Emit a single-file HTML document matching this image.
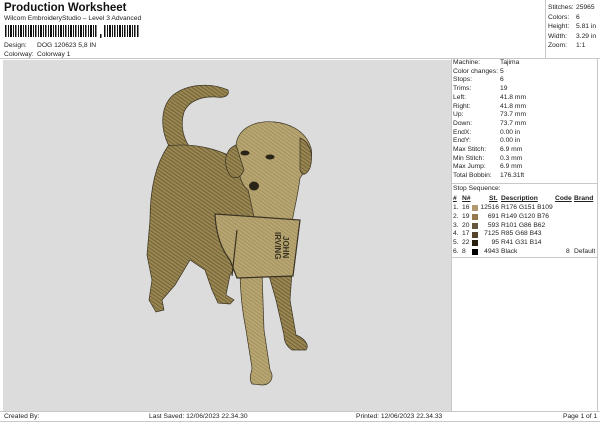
<!DOCTYPE html>
<html><head><meta charset="utf-8"><style>
*{margin:0;padding:0;box-sizing:border-box}
body{width:600px;height:424px;background:#fff;position:relative;overflow:hidden;font-family:"Liberation Sans",sans-serif;font-size:6.7px;color:#222}
.a{position:absolute;white-space:nowrap;line-height:8px}
.l{position:absolute;background:#c8c8c8}
</style></head><body>
<div class="a" style="left:4px;top:2px;font-size:11.5px;font-weight:bold;line-height:12px;color:#111">Production Worksheet</div>
<div class="a" style="left:4px;top:15px">Wilcom EmbroideryStudio – Level 3 Advanced</div>
<svg class="a" style="left:5px;top:25px" width="135" height="14">
<g fill="#111">
<rect x="0" y="0" width="1.5" height="12"/><rect x="3" y="0" width="1" height="12"/><rect x="5" y="0" width="2" height="12"/><rect x="8" y="0" width="1" height="12"/><rect x="10" y="0" width="1.5" height="12"/><rect x="13" y="0" width="1" height="12"/><rect x="15" y="0" width="2" height="12"/><rect x="18" y="0" width="1" height="12"/><rect x="20" y="0" width="1.5" height="12"/><rect x="23" y="0" width="1" height="12"/><rect x="25" y="0" width="2" height="12"/><rect x="28" y="0" width="1" height="12"/><rect x="30" y="0" width="1.5" height="12"/><rect x="33" y="0" width="1" height="12"/><rect x="35" y="0" width="2" height="12"/><rect x="38" y="0" width="1" height="12"/><rect x="40" y="0" width="1.5" height="12"/><rect x="43" y="0" width="1" height="12"/><rect x="45" y="0" width="2" height="12"/><rect x="48" y="0" width="1" height="12"/><rect x="50" y="0" width="1.5" height="12"/><rect x="53" y="0" width="1" height="12"/><rect x="55" y="0" width="2" height="12"/><rect x="58" y="0" width="1" height="12"/><rect x="60" y="0" width="1.5" height="12"/><rect x="63" y="0" width="1" height="12"/><rect x="65" y="0" width="2" height="12"/><rect x="68" y="0" width="1" height="12"/><rect x="70" y="0" width="1.5" height="12"/><rect x="73" y="0" width="1" height="12"/><rect x="75" y="0" width="2" height="12"/><rect x="78" y="0" width="1" height="12"/><rect x="80" y="0" width="1.5" height="12"/><rect x="83" y="0" width="1" height="12"/><rect x="85" y="0" width="2" height="12"/><rect x="88" y="0" width="1" height="12"/><rect x="90" y="0" width="1.5" height="12"/>
<rect x="95" y="9" width="1.5" height="4"/>
<rect x="99" y="0" width="1.5" height="12"/><rect x="102" y="0" width="1" height="12"/><rect x="104" y="0" width="2" height="12"/><rect x="107" y="0" width="1" height="12"/><rect x="109" y="0" width="1.5" height="12"/><rect x="112" y="0" width="1" height="12"/><rect x="114" y="0" width="2" height="12"/><rect x="117" y="0" width="1" height="12"/><rect x="119" y="0" width="1.5" height="12"/><rect x="122" y="0" width="1" height="12"/><rect x="124" y="0" width="2" height="12"/><rect x="127" y="0" width="1" height="12"/><rect x="129" y="0" width="1.5" height="12"/><rect x="132" y="0" width="1.5" height="12"/>
</g></svg>
<div class="a" style="left:4px;top:42px">Design:</div><div class="a" style="left:37px;top:42px">DOG 120623 5,8 IN</div>
<div class="a" style="left:4px;top:51px">Colorway:</div><div class="a" style="left:37px;top:51px">Colorway 1</div>
<div class="l" style="left:0;top:58px;width:600px;height:1px"></div>
<div class="l" style="left:545px;top:0;width:1px;height:58px"></div>
<div class="a" style="left:548px;top:3px;line-height:9.6px">Stitches:<br>Colors:<br>Height:<br>Width:<br>Zoom:</div>
<div class="a" style="left:576px;top:3px;line-height:9.6px">25965<br>6<br>5.81 in<br>3.29 in<br>1:1</div>
<div style="position:absolute;left:3px;top:60px;width:448px;height:351px;background:#dcdcdc"></div>
<div class="l" style="left:451px;top:59px;width:1px;height:352px"></div>
<div class="l" style="left:597px;top:59px;width:1px;height:352px"></div>
<div class="a" style="left:453px;top:59px;line-height:8.7px">Machine:<br>Color changes:<br>Stops:<br>Trims:<br>Left:<br>Right:<br>Up:<br>Down:<br>EndX:<br>EndY:<br>Max Stitch:<br>Min Stitch:<br>Max Jump:<br>Total Bobbin:</div>
<div class="a" style="left:500px;top:59px;line-height:8.7px">Tajima<br>5<br>6<br>19<br>41.8 mm<br>41.8 mm<br>73.7 mm<br>73.7 mm<br>0.00 in<br>0.00 in<br>6.9 mm<br>0.3 mm<br>6.9 mm<br>176.31ft</div>
<div class="l" style="left:452px;top:183px;width:146px;height:1px"></div>
<div class="a" style="left:453px;top:185px">Stop Sequence:</div>
<div class="a" style="left:453px;top:195px;font-weight:bold;text-decoration:underline">#</div>
<div class="a" style="left:462px;top:195px;font-weight:bold;text-decoration:underline">N#</div>
<div class="a" style="left:489px;top:195px;font-weight:bold;text-decoration:underline">St.</div>
<div class="a" style="left:501px;top:195px;font-weight:bold;text-decoration:underline">Description</div>
<div class="a" style="left:555px;top:195px;font-weight:bold;text-decoration:underline">Code</div>
<div class="a" style="left:574px;top:195px;font-weight:bold;text-decoration:underline">Brand</div>
<div class="a" style="left:453px;top:204px;line-height:8.8px">1.<br>2.<br>3.<br>4.<br>5.<br>6.</div>
<div class="a" style="left:462px;top:204px;line-height:8.8px">16<br>19<br>20<br>17<br>22<br>8</div>
<div class="a" style="left:478px;top:204px;line-height:8.8px;text-align:right;width:21px">12516<br>691<br>593<br>7125<br>95<br>4943</div>
<div class="a" style="left:501px;top:204px;line-height:8.8px">R176 G151 B109<br>R149 G120 B76<br>R101 G86 B62<br>R85 G68 B43<br>R41 G31 B14<br>Black</div>
<div class="a" style="left:566px;top:248px">8</div><div class="a" style="left:574px;top:248px">Default</div>
<div style="position:absolute;left:472px;top:205px;width:6px;height:6px;background:#b0976d"></div>
<div style="position:absolute;left:472px;top:214px;width:6px;height:6px;background:#95784c"></div>
<div style="position:absolute;left:472px;top:223px;width:6px;height:6px;background:#65563e"></div>
<div style="position:absolute;left:472px;top:232px;width:6px;height:6px;background:#55442b"></div>
<div style="position:absolute;left:472px;top:240px;width:6px;height:6px;background:#291f0e"></div>
<div style="position:absolute;left:472px;top:249px;width:6px;height:6px;background:#000"></div>
<div class="l" style="left:452px;top:257px;width:146px;height:1px"></div>
<div class="l" style="left:0;top:411px;width:600px;height:1px"></div>
<div class="l" style="left:0;top:421px;width:600px;height:1px"></div>
<div class="a" style="left:4px;top:413px">Created By:</div>
<div class="a" style="left:149px;top:413px">Last Saved: 12/06/2023 22.34.30</div>
<div class="a" style="left:356px;top:413px">Printed: 12/06/2023 22.34.33</div>
<div class="a" style="left:563px;top:413px">Page 1 of 1</div>
<svg style="position:absolute;left:0;top:0" width="600" height="424">
<defs>
<pattern id="h" width="3" height="3" patternUnits="userSpaceOnUse" patternTransform="rotate(35)"><rect width="3" height="3" fill="#9a8752"/><rect width="3" height="1" fill="#716238"/></pattern>
<pattern id="k" width="3" height="3" patternUnits="userSpaceOnUse" patternTransform="rotate(35)"><rect width="3" height="3" fill="#b8a672"/><rect width="3" height="0.7" fill="#9a8858"/></pattern>
</defs>
<g stroke="#3a3322" stroke-width="0.7">
<!-- tail -->
<path d="M170 148 C160 130 160 108 172 96 C186 84 210 82 228 90 C230 96 224 98 216 97 C200 96 188 102 184 112 C180 125 183 140 192 150 Z" fill="url(#h)"/>
<!-- body + hind legs -->
<path d="M168 146 C195 142 225 150 245 165 L258 215 L248 250 L230 275 L226 295 L234 300 L230 304 L218 303 L212 290 L205 270 L190 260 L175 285 L162 300 L164 310 L156 312 L149 300 L152 280 L147 255 L150 220 C150 190 155 165 168 146 Z" fill="url(#h)"/>
<!-- front leg left -->
<path d="M240 270 L262 272 L264 330 L270 370 C275 378 270 385 262 385 L252 384 C248 378 252 372 252 368 L246 330 C242 310 240 290 240 270 Z" fill="url(#k)"/>
<!-- front leg right -->
<path d="M268 272 L292 272 L290 300 L296 335 C304 338 310 345 306 350 L292 350 C286 346 284 340 284 335 L276 300 Z" fill="url(#h)"/>
<!-- head -->
<path d="M236 145 C238 128 255 120 275 122 C292 124 306 132 311 148 C314 160 306 170 300 178 C298 195 295 205 292 222 L255 222 C252 208 250 198 248 190 C240 185 236 165 236 145 Z" fill="url(#k)"/>
<!-- ears -->
<path d="M236 145 C228 148 222 158 228 172 C232 180 240 180 244 170 Z" fill="url(#h)"/>
<path d="M300 138 C310 142 314 155 310 168 C306 176 302 176 300 170 Z" fill="url(#h)"/>
<!-- book -->
<path d="M215 214 L300 220 L293 276 L237 278 L230 260 C222 250 216 235 215 214 Z" fill="url(#k)" stroke-width="1.2"/>
<path d="M237 230 L232 276" fill="none" stroke-width="1.2"/>
</g>
<g fill="#2a2418"><ellipse cx="245" cy="153" rx="4.5" ry="2.5"/><ellipse cx="270" cy="157" rx="4.5" ry="2.5"/><ellipse cx="254" cy="186" rx="5" ry="4.5"/></g>
<text x="0" y="0" transform="translate(283,236) rotate(90)" font-family="Liberation Sans" font-size="8" font-weight="bold" fill="#3a3322">JOHN</text>
<text x="0" y="0" transform="translate(275,232) rotate(90)" font-family="Liberation Sans" font-size="8" font-weight="bold" fill="#3a3322">IRVING</text>
</svg>
</body></html>
